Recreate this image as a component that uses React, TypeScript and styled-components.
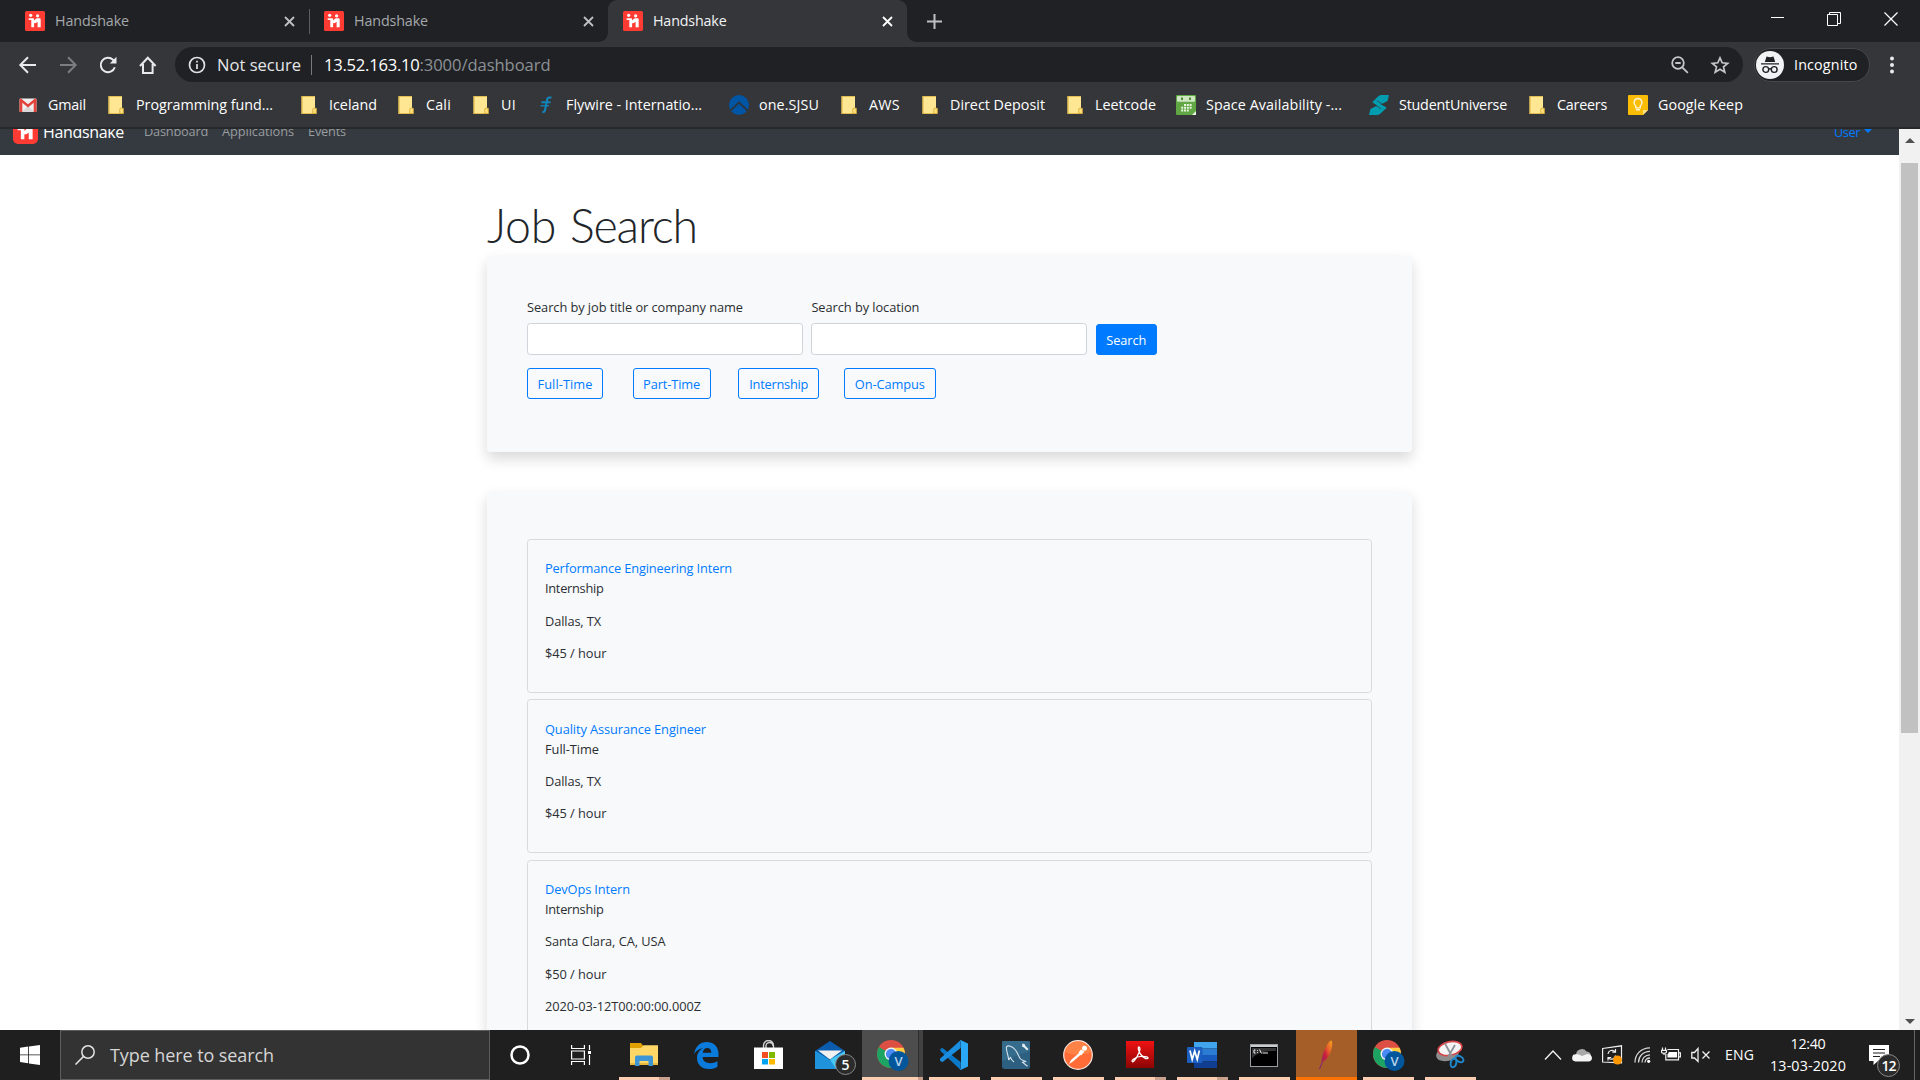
import React, { useLayoutEffect, useRef } from "react";
import styled, { createGlobalStyle, css } from "styled-components";

const Global = createGlobalStyle`
  *, *::before, *::after { box-sizing: border-box; }
  body { margin: 0; background: #fff; overflow: hidden; }
  svg { display: block; flex: none; }
`;

const Screen = styled.div`
  width: 1920px;
  height: 1080px;
  display: flex;
  flex-direction: column;
  overflow: hidden;
  font-family: "Open Sans", "Noto Sans", sans-serif;
  font-size: 14.3px;
  line-height: 1;
  color: #fff;
`;

/* ---------- text that keeps a set advance width ---------- */

const FitSpan = styled.span`
  display: inline-block;
  white-space: pre;
`;

function Fit({ w, children }: { w: number; children: string }) {
  const ref = useRef<HTMLSpanElement>(null);
  useLayoutEffect(() => {
    const el = ref.current;
    if (!el) return;
    el.style.letterSpacing = "0px";
    const natural = el.getBoundingClientRect().width;
    el.style.letterSpacing = `${(w - natural) / children.length}px`;
  }, [w, children]);
  return <FitSpan ref={ref}>{children}</FitSpan>;
}

/* ---------- tab strip ---------- */

const TabStrip = styled.div`
  flex: none;
  height: 42px;
  display: flex;
  background: #202124;
  padding-left: 10px;
`;

const Tab = styled.div<{ $active?: boolean; $line?: boolean }>`
  position: relative;
  width: 299px;
  height: 42px;
  padding: 0 14px 0 15px;
  display: flex;
  align-items: center;
  gap: 10px;
  color: ${(p) => (p.$active ? "#f1f3f4" : "#a4a8ac")};
  ${(p) =>
    p.$active &&
    css`
      background: #35363a;
      border-radius: 9px 9px 0 0;
      &::before,
      &::after {
        content: "";
        position: absolute;
        bottom: 0;
        width: 9px;
        height: 9px;
      }
      &::before {
        left: -9px;
        background: radial-gradient(circle at 0 0, transparent 8.5px, #35363a 9px);
      }
      &::after {
        right: -9px;
        background: radial-gradient(circle at 100% 0, transparent 8.5px, #35363a 9px);
      }
    `}
  ${(p) =>
    p.$line &&
    css`
      &::after {
        content: "";
        position: absolute;
        right: -1px;
        top: 9px;
        width: 1px;
        height: 25px;
        background: #5a5c60;
      }
    `}
`;

const TabTitle = styled.div`
  flex: 1;
`;

const NewTab = styled.div`
  margin-left: 20px;
  display: flex;
  align-items: center;
`;

const WindowButtons = styled.div`
  margin-left: auto;
  height: 38px;
  display: flex;
  align-items: center;
  gap: 43px;
  padding-right: 22px;
`;

/* ---------- toolbar ---------- */

const Toolbar = styled.div`
  flex: none;
  height: 45px;
  display: flex;
  align-items: center;
  background: #35363a;
  padding: 0 20px 0 18px;
`;

const NavButtons = styled.div`
  width: 157px;
  display: flex;
  gap: 20px;
`;

const Omnibox = styled.div`
  width: 1568px;
  height: 35px;
  border-radius: 18px;
  background: #202124;
  display: flex;
  align-items: center;
  padding: 0 13px 0 13px;
  font-size: 16.6px;
  color: #e4e6e8;
`;

const Security = styled.div`
  display: flex;
  align-items: center;
  gap: 11px;
  padding-right: 10px;
  border-right: 1px solid #77797c;
  height: 20px;
  line-height: 20px;
`;

const Address = styled.div`
  margin-left: 12px;
  display: flex;
  color: #fff;
  flex: 1;
  padding-top: 1px;
`;

const Dim = styled.span`
  color: #8d9196;
`;

const OmniIcons = styled.div`
  display: flex;
  gap: 20px;
`;

const Incognito = styled.div`
  margin-left: 11px;
  width: 116px;
  height: 34px;
  border: 1px solid #46474b;
  border-radius: 17px;
  background: #202124;
  display: flex;
  align-items: center;
  gap: 10px;
  padding-left: 1px;
  line-height: 18px;
`;

const PillLabel = styled.div`
  padding-top: 1px;
`;

const MenuDots = styled.div`
  margin-left: 19px;
`;

/* ---------- bookmarks ---------- */

const Bookmarks = styled.div`
  flex: none;
  height: 42px;
  display: flex;
  align-items: center;
  background: #35363a;
  border-bottom: 2px solid #27282a;
  padding: 0 0 5px 18px;
`;

const Bookmark = styled.div<{ $span: number }>`
  flex: none;
  width: ${(p) => p.$span}px;
  display: flex;
  align-items: center;
  gap: 10px;
`;

const BookmarkLabel = styled.div`
  padding-top: 2px;
`;

/* ---------- page ---------- */

const Viewport = styled.div`
  flex: none;
  height: 901px;
  display: flex;
  background: #fff;
`;

const Page = styled.div`
  width: 1899px;
  overflow: hidden;
  color: #2a2e32;
  font-size: 12.8px;
`;

const Navbar = styled.div`
  height: 26px;
  overflow: hidden;
  background: #343a40;
  display: flex;
  flex-direction: column;
  justify-content: flex-end;
`;

const NavRow = styled.div`
  flex: none;
  height: 48px;
  display: flex;
  align-items: center;
  padding: 0 27px 0 13px;
  color: #999c9f;
`;

const Brand = styled.div`
  display: flex;
  align-items: center;
  gap: 5px;
  font-size: 16px;
  color: #fff;
  margin-right: 20px;
`;

const BrandName = styled.div`
  padding-top: 1px;
`;

const NavLinks = styled.div`
  display: flex;
  gap: 14px;
  flex: 1;
`;

const UserMenu = styled.div`
  display: flex;
  align-items: center;
  gap: 4px;
  color: #007bff;
`;

const UserName = styled.div`
  padding-top: 2px;
`;

const Caret = styled.i`
  border: 4px solid transparent;
  border-top-color: #007bff;
  border-bottom: 0;
`;

const Container = styled.main`
  width: 925px;
  margin-left: 487px;
  padding-top: 43px;
`;

const Heading = styled.h1`
  margin: 0;
  height: 58px;
  display: flex;
  gap: 14px;
  line-height: 54px;
  font-family: Lato, "Open Sans", sans-serif;
  font-size: 46.5px;
  font-weight: 300;
  color: #212529;
`;

const Panel = styled.section<{ $h: number }>`
  height: ${(p) => p.$h}px;
  margin-bottom: 40px;
  border-radius: 3.4px;
  background: #f8f9fa;
  box-shadow: 0 6.7px 13.4px rgba(0, 0, 0, 0.15);
`;

const SearchForm = styled(Panel)`
  padding: 41px 40px 0;
`;

const Fields = styled.div`
  display: flex;
  align-items: flex-end;
  gap: 8.4px;
`;

const Field = styled.label`
  width: 276px;
  display: flex;
  flex-direction: column;
  gap: 6px;
  line-height: 20px;
`;

const Input = styled.input`
  width: 100%;
  height: 32px;
  border: 1px solid #ced4da;
  border-radius: 3.4px;
  background: #fff;
`;

const Button = styled.button<{ $w: number; $solid?: boolean }>`
  width: ${(p) => p.$w}px;
  height: 31px;
  padding: 2px 0 0;
  border: 1px solid #007bff;
  border-radius: 3px;
  background: ${(p) => (p.$solid ? "#007bff" : "transparent")};
  color: ${(p) => (p.$solid ? "#fff" : "#007bff")};
  font: 12.8px/1 "Open Sans", "Noto Sans", sans-serif;
`;

const Filters = styled.div`
  margin-top: 13px;
  display: grid;
  grid-template-columns: repeat(4, 105.6px);
`;

const Results = styled(Panel)`
  padding: 47px 40px 0;
`;

const Job = styled.article<{ $h: number }>`
  height: ${(p) => p.$h}px;
  margin-bottom: 6.7px;
  padding: 18.2px 17px;
  border: 1px solid #d8dadc;
  border-radius: 3.4px;
  line-height: 20px;
`;

const JobTitle = styled.div`
  color: #007bff;
`;

const JobLine = styled.p`
  margin: 0 0 12.4px;
`;

const Scrollbar = styled.div`
  width: 21px;
  background: #f1f1f1;
  display: flex;
  flex-direction: column;
  align-items: center;
  justify-content: space-between;
  padding: 9px 0 6px;
`;

const Thumb = styled.div`
  width: 17px;
  height: 570px;
  margin: 20px 0 auto;
  background: #c1c1c1;
`;

const Arrow = styled.i<{ $down?: boolean }>`
  border: 5px solid transparent;
  ${(p) =>
    p.$down
      ? "border-top-color: #505050; border-bottom: 0;"
      : "border-bottom-color: #505050; border-top: 0;"}
`;

/* ---------- taskbar ---------- */

const Taskbar = styled.div`
  flex: none;
  height: 50px;
  display: flex;
  background: #1f1f1f;
`;

const Start = styled.div`
  width: 60px;
  display: flex;
  align-items: center;
  justify-content: center;
`;

const SearchBox = styled.div`
  width: 430px;
  border: 1px solid #5d5d5d;
  background: #333;
  display: flex;
  align-items: center;
  gap: 15px;
  padding-left: 14px;
  font-size: 18px;
  color: #d6d6d6;
`;

const Slot = styled.div<{ $bg?: string; $line?: string; $split?: boolean; $wide?: boolean }>`
  flex: none;
  position: relative;
  width: 62px;
  display: flex;
  align-items: center;
  justify-content: center;
  &::before {
    content: "";
    position: absolute;
    z-index: 0;
    inset: 0 0 0 1px;
    background: ${(p) => p.$bg ?? "transparent"};
  }
  &::after {
    content: "";
    position: absolute;
    left: ${(p) => (p.$wide ? 1 : 6)}px;
    right: ${(p) => (p.$wide ? 0 : 5)}px;
    bottom: 0;
    height: 3px;
    background: ${(p) =>
      p.$line
        ? p.$split
          ? `linear-gradient(90deg, ${p.$line} ${p.$wide ? "56px" : "40px"}, #c9a18c 0)`
          : p.$line
        : "transparent"};
  }
  svg {
    position: relative;
  }
`;

const Cortana = styled.div`
  width: 61px;
  padding-right: 2px;
  display: flex;
  align-items: center;
  justify-content: center;
`;

const Badge = styled.div<{ $x: number; $y: number; $size: number }>`
  position: absolute;
  left: ${(p) => p.$x}px;
  top: ${(p) => p.$y}px;
  width: ${(p) => p.$size}px;
  height: ${(p) => p.$size}px;
  border: 1px solid #8a8a8a;
  border-radius: 50%;
  background: #2b2b2b;
  display: flex;
  align-items: center;
  justify-content: center;
  font-size: 14px;
  font-weight: 600;
`;

const Tray = styled.div`
  margin-left: auto;
  display: flex;
  align-items: center;
`;

const TrayIcons = styled.div`
  display: flex;
  align-items: center;
  gap: 10px;
`;

const Language = styled.div`
  margin-left: 14px;
  width: 45px;
  font-size: 14px;
`;

const Clock = styled.div`
  width: 76px;
  display: flex;
  flex-direction: column;
  align-items: center;
  gap: 8px;
  font-size: 14.3px;
`;

const Notifications = styled.div`
  position: relative;
  margin-left: 23px;
  width: 45px;
  height: 50px;
  padding-top: 15px;
`;

const ShowDesktop = styled.div`
  height: 50px;
  width: 6px;
  border-left: 1px solid #666;
`;

/* ---------- icons ---------- */

const Favicon = ({ size = 20, round = 1.6 }: { size?: number; round?: number }) => (
  <svg width={size} height={size} viewBox="0 0 20 20">
    <rect width="20" height="20" rx={round} fill="#ff3b33" />
    <g fill="#fff">
      <circle cx="5.700" cy="4.300" r="1.600" />
      <circle cx="12.600" cy="4.800" r="1.600" />
      <path d="M3.700 7.200h4.200c.8 0 1.200.4 1.200 1.200v1.200l1.300-1.300c.6-.7 1.100-1 2-1h2c.8 0 1.300.5 1.300 1.300v7.600h-3.100v-5.500l-1.300 1.100c-.6.5-1.300.6-2.200.3v4.100H6.300V8.900H3.700z" />
    </g>
  </svg>
);

const Close = ({ color }: { color: string }) => (
  <svg width="11" height="11" viewBox="0 0 11 11" stroke={color} strokeWidth="1.8">
    <path d="M1 1l9 9M10 1l-9 9" />
  </svg>
);

const Folder = () => (
  <svg width="20" height="20" viewBox="0 0 20 20">
    <path d="M2.500 1h13.500v12.200l1.300.6V19H2.500z" fill="#ffe693" />
    <path d="M2.500 1h1v18h-1zM2.500 18.200h14.800v.8H2.500zM2.500 1H16v.8H2.500z" fill="#d9b13b" />
    <path d="M13.800 18.500v-4.300c0-.8.500-1 1.400-1H17.300v5.300z" fill="#ffe27a" stroke="#cfa52e" strokeWidth=".8" />
  </svg>
);

const Gmail = () => (
  <svg width="20" height="20" viewBox="0 0 20 20">
    <rect x="1.500" y="3.500" width="17" height="13.500" rx="1" fill="#f0eeee" />
    <path d="M3.500 17L10 11l6.500 6z" fill="#d9d7d7" />
    <path d="M1.500 17V4.500c0-1 1-1.300 1.800-.7L10 9.300l6.700-5.500c.8-.6 1.800-.3 1.800.7V17h-2.800V7.800L10 12.500 4.300 7.800V17z" fill="#e0443a" />
  </svg>
);

const Flywire = () => (
  <svg width="20" height="20" viewBox="0 0 20 20" fill="none" stroke="#1187bd" strokeWidth="2">
    <path d="M15.500 2.500h-2c-1.600 0-2.200.8-2.500 2.400L9.200 14.500c-.3 1.500-1 2.700-2.700 2.700M5.500 7.300h9" />
    <path d="M4.500 10.800h8.500" strokeWidth="1.300" />
  </svg>
);

const Sjsu = () => (
  <svg width="20" height="20" viewBox="0 0 20 20">
    <circle cx="10" cy="10" r="10" fill="#0055a5" />
    <path d="M1.500 15.500L10 7.500l8.500 8" fill="none" stroke="#2c3540" strokeWidth="1.800" />
    <path d="M4.500 18L10 12.500l5.500 5.500" fill="#0055a5" />
  </svg>
);

const Calendar = () => (
  <svg width="20" height="20" viewBox="0 0 20 20">
    <rect width="20" height="20" rx="1" fill="#61a744" />
    <rect x="1" y="1" width="18" height="5.800" rx="1" fill="#cfe6c3" />
    <path d="M5 2.500h2v2.500H5zM13 2.500h2v2.500h-2z" fill="#4d8e33" />
    <g fill="#e8f5e0">
      <path d="M8 9h2v2H8zM10.800 9h2v2h-2zM13.600 9h2v2h-2zM5.200 11.800h2v2h-2zM8 11.800h2v2H8zM10.800 11.800h2v2h-2zM13.600 11.800h2v2h-2zM5.200 14.600h2v2h-2zM8 14.600h2v2H8zM10.800 14.600h2v2h-2z" />
      <path d="M16 20l4-4v4z" />
    </g>
  </svg>
);

const StudentUniverse = () => (
  <svg width="20" height="20" viewBox="0 0 20 20" fill="#009db1">
    <path d="M20 0l-1.500 6L9 11 3 7.500 9 1.500c1-.9 2-1.500 3.500-1.500z" />
    <path d="M0 20l1.500-6L11 9l7 3.500-6.500 6c-1 .9-2 1.500-3.500 1.500z" />
    <path d="M3 7.500L12 14M8 5.500l10 7" stroke="#35363a" strokeWidth=".7" />
  </svg>
);

const Keep = () => (
  <svg width="20" height="20" viewBox="0 0 20 20">
    <path d="M1 0h18a1 1 0 011 1v14l-5 5H1a1 1 0 01-1-1V1a1 1 0 011-1z" fill="#fbbc04" />
    <path d="M15 20v-5h5z" fill="#ffe08a" />
    <path d="M10 3.500a4 4 0 00-2.300 7.200v2.200h4.600v-2.200A4 4 0 0010 3.500zM8 14.800h4" fill="none" stroke="#fff3cf" strokeWidth="1.400" />
  </svg>
);

const Chrome = () => (
  <svg width="36" height="32" viewBox="0 0 36 32">
    <g transform="translate(17 15)">
      <circle r="14" fill="#dd4f43" />
      <path d="M0 0L-12.120-7A14 14 0 000 14L6 3z" fill="#1da462" />
      <path d="M0-6.300H12.500A14 14 0 010 14L5.500 3.200z" fill="#ffcd42" />
      <circle r="6.500" fill="#f1f1f1" />
      <circle r="5.100" fill="#4a8af4" />
    </g>
    <circle cx="24.500" cy="22" r="10" fill="#02569b" />
    <text x="24.500" y="26.800" textAnchor="middle" fontFamily="Open Sans, sans-serif" fontWeight="600" fontSize="13" fill="#b9d3ea">
      V
    </text>
  </svg>
);

const Explorer = () => (
  <svg width="28" height="24" viewBox="0 0 28 24">
    <path d="M0 0h11l2 2.500V6H0z" fill="#e0a100" />
    <path d="M0 5h11l2.500-2.700H28V22H0z" fill="#ffd767" />
    <path d="M0 20h28v2H0z" fill="#e9b93f" />
    <path d="M5 23V14.500c0-1.300.8-2 2-2h14c1.200 0 2 .7 2 2V23h-4.500v-5h-9v5z" fill="#3e95d6" />
  </svg>
);

const Edge = () => (
  <svg width="25" height="27" viewBox="0 0 25 27">
    <path d="M0 12C1.200 4.700 6 0 12.800 0 20.300 0 24.500 5.200 24.500 11.700V15H8.600c.2 4.200 3.600 6.200 7.700 6.200 2.700 0 5-.7 7.200-2v5.500C21.200 26.200 18.300 27 15 27 7.400 27 3 22.300 3 16c0-4.400 2.300-8 6.300-10C5.500 6.500 2 8.700 0 12zm8.700-1.200h8.600c0-3-1.400-4.800-4-4.800-2.500 0-4.200 2-4.600 4.800z" fill="#0a7bdb" />
  </svg>
);

const Store = () => (
  <svg width="29" height="30" viewBox="0 0 29 30">
    <path d="M9.500 8V5.500a5 5 0 0110 0V8M12 8V6a3.500 3.500 0 017 0" fill="none" stroke="#cfcfcf" strokeWidth="1.400" />
    <path d="M0 7.500h29V29H0z" fill="#fff" />
    <path d="M8 12h6v6H8z" fill="#f25022" />
    <path d="M15 12h6v6h-6z" fill="#7fba00" />
    <path d="M8 19h6v5.500H8z" fill="#00a4ef" />
    <path d="M15 19h6v5.500h-6z" fill="#ffb900" />
  </svg>
);

const Mail = () => (
  <svg width="30" height="28" viewBox="0 0 30 28">
    <path d="M0 10L15 0l15 10v8H0z" fill="#0b5cad" />
    <path d="M0 10l15 9.500L30 10v18H0z" fill="#2aa9ea" />
    <path d="M0 10l30 18H0z" fill="#1f94dd" />
    <path d="M3 9.500h24L15 18.500z" fill="#f1f1f1" />
    <path d="M30 10L15 18.500 21 28h9z" fill="#45c7f6" />
  </svg>
);

const VsCode = () => (
  <svg width="30" height="30" viewBox="0 0 30 30">
    <path d="M1 9.600l2.200-1.900 18.500 14.400V30L2 11.500z" fill="#0b79c8" />
    <path d="M1 20.400l2.200 1.900L21.700 8V0L1 18.800z" fill="#1a8ee0" />
    <path d="M21.500 0L29 3.500v23L21.500 30l-1-1c.9.500 1.500 0 1.500-1V2c0-1-.6-1.500-1.500-1z" fill="#2aa8f5" />
  </svg>
);

const MySql = () => (
  <svg width="28" height="28" viewBox="0 0 28 28">
    <rect width="28" height="28" rx="2.500" fill="#2c5f80" />
    <path d="M0 0h28v10L0 20z" fill="#3c7393" opacity=".6" />
    <g fill="none" stroke="#d5e2ea" strokeWidth="1.100">
      <path d="M6.500 19C7 15 3.500 9 4.500 6c1.500-2.500 6-.5 8.500 2.500 3 3.500 3.500 7 5.500 9.500 1 1.200 3.500 1.500 5 2.500l-3 .8 5 4M6.500 19c.8-.5 1.300-2 2-2.500 1 2.500 2 3.500 3.500 4.500" />
    </g>
    <path d="M20.500 2.500l2 .5 1 2 3 3-1.500 1.500-3-3-2-1z" fill="#e3edf2" />
  </svg>
);

const Postman = () => (
  <svg width="30" height="30" viewBox="0 0 30 30">
    <circle cx="15" cy="15" r="14.300" fill="#ff6c37" stroke="#f7e5dc" strokeWidth="1.200" />
    <path d="M1.500 12a14 14 0 0127 0C20 16 8 15 1.500 12z" fill="#ff8d4d" opacity=".7" />
    <path d="M6 24l2-4 8-7 2 1.500-8 7zM15.500 12.500l2.500-3 3.500 2-3.500 4z" fill="#fff" />
    <circle cx="21.500" cy="8.300" r="2.500" fill="#fff" />
  </svg>
);

const Adobe = () => (
  <svg width="28" height="28" viewBox="0 0 28 28">
    <defs>
      <linearGradient id="adobe" x1="0" y1="0" x2="0" y2="1">
        <stop offset="0" stopColor="#f01212" />
        <stop offset="1" stopColor="#8c0505" />
      </linearGradient>
    </defs>
    <rect width="28" height="27" fill="url(#adobe)" />
    <path d="M13 6c2.500 1-.5 9-5.500 14.500-1.500 1-2-.8-.5-2 4-3 10-4 14.500-2.300 1.500 1-.5 2-2.500 1C14.500 15 12 9.500 12.300 6.800c.1-.7.400-.8.700-.8z" fill="none" stroke="#fff" strokeWidth="1.300" />
  </svg>
);

const Word = () => (
  <svg width="30" height="26" viewBox="0 0 30 26">
    <path d="M7 0h23v6.500H7z" fill="#41a5ee" />
    <path d="M7 6.500h23V13H7z" fill="#2b7cd3" />
    <path d="M7 13h23v6.500H7z" fill="#185abd" />
    <path d="M7 19.500h23V26H7z" fill="#103f91" />
    <rect y="5" width="15.500" height="16" rx="1" fill="#1c5fc1" />
    <path d="M3 8.500l2.200 9 2.500-8.500 2.500 8.500 2.200-9" fill="none" stroke="#fff" strokeWidth="1.700" />
  </svg>
);

const Cmd = () => (
  <svg width="28" height="23" viewBox="0 0 28 23">
    <rect x=".5" y=".5" width="27" height="22" fill="#000" stroke="#9aa0a4" />
    <path d="M1 1h26v2H1z" fill="#c9cdd0" />
    <path d="M2 4h24v3C14 7 5 10 2 15z" fill="#353535" />
    <path d="M5.500 6H4v3h1.500M7.500 6.200v.8M7.500 8.200V9M9.500 5.500l2 4M12.500 9H18" fill="none" stroke="#eee" strokeWidth="1" />
  </svg>
);

const Feather = () => (
  <svg width="18" height="30" viewBox="0 0 18 30">
    <defs>
      <linearGradient id="feather" x1="1" y1="0" x2="0" y2="1">
        <stop offset="0" stopColor="#f9a51b" />
        <stop offset=".3" stopColor="#e8602a" />
        <stop offset=".5" stopColor="#c8203c" />
        <stop offset="1" stopColor="#6d2c7f" />
      </linearGradient>
    </defs>
    <path d="M14.500.5c1.400 2.500.6 7-.8 11-1.500 4.300-3.800 8-7.500 10L3 29.500l-1-.5 2.700-7C4.500 17 6.800 11 9.300 6.500c1.600-3 3.200-6.300 5.200-6z" fill="url(#feather)" />
  </svg>
);

const Snip = () => (
  <svg width="30" height="30" viewBox="0 0 30 30">
    <ellipse cx="12.500" cy="14" rx="11.500" ry="7" fill="#8d8d8d" transform="rotate(-12 12.500 14)" />
    <ellipse cx="15" cy="8.500" rx="12" ry="6.800" fill="#f4f4f4" stroke="#d8454a" strokeWidth="1.600" transform="rotate(-12 15 8.500)" />
    <path d="M10 3.500l7 13M20 5l-7 12" stroke="#8c9297" strokeWidth="1.800" />
    <g fill="none" stroke="#1f86cc" strokeWidth="2">
      <ellipse cx="18.500" cy="23" rx="2.800" ry="4.300" transform="rotate(12 18.500 23)" />
      <ellipse cx="24.500" cy="19" rx="4.300" ry="2.700" transform="rotate(30 24.500 19)" />
    </g>
  </svg>
);

/* ---------- data ---------- */

const bookmarks: { icon: React.ReactNode; text: string; w: number; span: number }[] = [
  { icon: <Gmail />, text: "Gmail", w: 38, span: 88 },
  { icon: <Folder />, text: "Programming fund...", w: 137, span: 193 },
  { icon: <Folder />, text: "Iceland", w: 48, span: 97 },
  { icon: <Folder />, text: "Cali", w: 25, span: 75 },
  { icon: <Folder />, text: "UI", w: 15, span: 65 },
  { icon: <Flywire />, text: "Flywire - Internatio...", w: 136, span: 193 },
  { icon: <Sjsu />, text: "one.SJSU", w: 60, span: 110 },
  { icon: <Folder />, text: "AWS", w: 31, span: 81 },
  { icon: <Folder />, text: "Direct Deposit", w: 95, span: 145 },
  { icon: <Folder />, text: "Leetcode", w: 61, span: 111 },
  { icon: <Calendar />, text: "Space Availability -...", w: 136, span: 193 },
  { icon: <StudentUniverse />, text: "StudentUniverse", w: 108, span: 158 },
  { icon: <Folder />, text: "Careers", w: 50, span: 101 },
  { icon: <Keep />, text: "Google Keep", w: 85, span: 130 },
];

const jobs: { title: [string, number]; lines: [string, number][]; h: number }[] = [
  { title: ["Performance Engineering Intern", 187], lines: [["Internship", 58.5], ["Dallas, TX", 56], ["$45 / hour", 61.5]], h: 153.7 },
  { title: ["Quality Assurance Engineer", 161], lines: [["Full-Time", 54], ["Dallas, TX", 56], ["$45 / hour", 61.5]], h: 153.7 },
  {
    title: ["DevOps Intern", 85],
    lines: [["Internship", 58.5], ["Santa Clara, CA, USA", 120.5], ["$50 / hour", 61.5], ["2020-03-12T00:00:00.000Z", 156]],
    h: 186,
  },
];

const filters: { text: string; w: number; box: number }[] = [
  { text: "Full-Time", w: 55, box: 76 },
  { text: "Part-Time", w: 57, box: 78 },
  { text: "Internship", w: 59, box: 81 },
  { text: "On-Campus", w: 70, box: 92 },
];

const LINE = "#fbcdb2";

export default function App() {
  return (
    <Screen>
      <Global />
      <TabStrip>
        <Tab $line>
          <Favicon />
          <TabTitle><Fit w={74}>Handshake</Fit></TabTitle>
          <Close color="#bdc1c6" />
        </Tab>
        <Tab>
          <Favicon />
          <TabTitle><Fit w={74}>Handshake</Fit></TabTitle>
          <Close color="#bdc1c6" />
        </Tab>
        <Tab $active>
          <Favicon />
          <TabTitle><Fit w={73.5}>Handshake</Fit></TabTitle>
          <Close color="#fff" />
        </Tab>
        <NewTab>
          <svg width="15" height="15" viewBox="0 0 15 15" stroke="#bdc1c6" strokeWidth="2">
            <path d="M7.500 0v15M0 7.500h15" />
          </svg>
        </NewTab>
        <WindowButtons>
          <svg width="13" height="13" viewBox="0 0 13 13" stroke="#fff"><path d="M0 4.500h13" /></svg>
          <svg width="14" height="14" viewBox="0 0 14 14" fill="none" stroke="#fff">
            <path d="M.5 2.500h10v11H.5zM2.500 2.500v-2h11v11h-3" />
          </svg>
          <svg width="14" height="14" viewBox="0 0 14 14" stroke="#fff" strokeWidth="1.200"><path d="M.5.5l13 13M13.500.5l-13 13" /></svg>
        </WindowButtons>
      </TabStrip>

      <Toolbar>
        <NavButtons>
          <svg width="20" height="20" viewBox="0 0 20 20" fill="none" stroke="#e8eaed" strokeWidth="2">
            <path d="M18 10H2.500M10 2.200L2.300 10l7.700 7.800" />
          </svg>
          <svg width="20" height="20" viewBox="0 0 20 20" fill="none" stroke="#7b7d80" strokeWidth="2">
            <path d="M2 10h15.500M10 2.200l7.700 7.800-7.700 7.800" />
          </svg>
          <svg width="20" height="20" viewBox="0 0 20 20" fill="none" stroke="#e8eaed" strokeWidth="2">
            <path d="M16.800 12.200A7.200 7.200 0 1115 4.800l1.500 1.500" />
            <path d="M18.500 1.800v6.700h-6.700z" fill="#e8eaed" stroke="none" />
          </svg>
          <svg width="20" height="20" viewBox="0 0 20 20" fill="none" stroke="#e8eaed" strokeWidth="2">
            <path d="M2 11l7.800-8.200L17.600 11M5 9v9h9.600V9" />
          </svg>
        </NavButtons>
        <Omnibox>
          <Security>
            <svg width="18" height="18" viewBox="0 0 18 18" fill="none" stroke="#e0e2e4" strokeWidth="1.700">
              <circle cx="9" cy="9" r="7.500" />
              <path d="M9 8v5M9 4.800v1.700" />
            </svg>
            <Fit w={84}>Not secure</Fit>
          </Security>
          <Address>
            <Fit w={95.5}>13.52.163.10</Fit>
            <Dim><Fit w={131}>:3000/dashboard</Fit></Dim>
          </Address>
          <OmniIcons>
            <svg width="20" height="20" viewBox="0 0 20 20" fill="none" stroke="#c4c7ca" strokeWidth="1.800">
              <circle cx="8" cy="8" r="5.800" />
              <path d="M12.300 12.300l5.500 5.500M5.300 8h5.400" />
            </svg>
            <svg width="20" height="20" viewBox="0 0 20 20" fill="none" stroke="#c4c7ca" strokeWidth="1.700">
              <path d="M10 2.800l2.200 5 5.500.5-4.200 3.600 1.300 5.300-4.800-2.900-4.800 2.900 1.300-5.300-4.200-3.600 5.500-.5z" />
            </svg>
          </OmniIcons>
        </Omnibox>
        <Incognito>
          <svg width="28" height="28" viewBox="0 0 28 28">
            <circle cx="14" cy="14" r="14" fill="#f1f3f4" />
            <path d="M10.500 5.500l3.500.7 3.500-.7L19.200 11H8.800zM5 12.200h18v1.300H5z" fill="#202124" />
            <g fill="none" stroke="#202124" strokeWidth="1.400">
              <circle cx="9.800" cy="18.500" r="2.900" />
              <circle cx="18.200" cy="18.500" r="2.900" />
              <path d="M12.500 18.200q1.500-1 3 0" />
            </g>
          </svg>
          <PillLabel><Fit w={63.5}>Incognito</Fit></PillLabel>
        </Incognito>
        <MenuDots>
          <svg width="6" height="18" viewBox="0 0 6 18" fill="#e8eaed">
            <circle cx="3" cy="2.500" r="2" />
            <circle cx="3" cy="9" r="2" />
            <circle cx="3" cy="15.500" r="2" />
          </svg>
        </MenuDots>
      </Toolbar>

      <Bookmarks>
        {bookmarks.map((b) => (
          <Bookmark key={b.text} $span={b.span}>
            {b.icon}
            <BookmarkLabel><Fit w={b.w}>{b.text}</Fit></BookmarkLabel>
          </Bookmark>
        ))}
      </Bookmarks>

      <Viewport>
        <Page>
          <Navbar>
            <NavRow>
              <Brand>
                <Favicon size={25} round={4} />
                <BrandName><Fit w={81}>Handshake</Fit></BrandName>
              </Brand>
              <NavLinks>
                <Fit w={64}>Dashboard</Fit>
                <Fit w={72}>Applications</Fit>
                <Fit w={38}>Events</Fit>
              </NavLinks>
              <UserMenu>
                <UserName><Fit w={26}>User</Fit></UserName>
                <Caret />
              </UserMenu>
            </NavRow>
          </Navbar>
          <Container>
            <Heading>
              <Fit w={69}>Job</Fit>
              <Fit w={127}>Search</Fit>
            </Heading>
            <SearchForm $h={196}>
              <Fields>
                <Field>
                  <div><Fit w={216}>Search by job title or company name</Fit></div>
                  <Input />
                </Field>
                <Field>
                  <div><Fit w={108}>Search by location</Fit></div>
                  <Input />
                </Field>
                <Button $w={61} $solid><Fit w={40}>Search</Fit></Button>
              </Fields>
              <Filters>
                {filters.map((f) => (
                  <Button key={f.text} $w={f.box}><Fit w={f.w}>{f.text}</Fit></Button>
                ))}
              </Filters>
            </SearchForm>
            <Results $h={700}>
              {jobs.map((j) => (
                <Job key={j.title[0]} $h={j.h}>
                  <JobTitle><Fit w={j.title[1]}>{j.title[0]}</Fit></JobTitle>
                  {j.lines.map(([text, w]) => (
                    <JobLine key={text}><Fit w={w}>{text}</Fit></JobLine>
                  ))}
                </Job>
              ))}
            </Results>
          </Container>
        </Page>
        <Scrollbar>
          <Arrow />
          <Thumb />
          <Arrow $down />
        </Scrollbar>
      </Viewport>

      <Taskbar>
        <Start>
          <svg width="20" height="20" viewBox="0 0 20 20" fill="#fff">
            <path d="M0 2.800l8.200-1.200v7.900H0zM9 1.500L20 0v9.500H9zM0 10.300h8.200v7.900L0 17.100zM9 10.300h11V20L9 18.400z" />
          </svg>
        </Start>
        <SearchBox>
          <svg width="20" height="20" viewBox="0 0 20 20" fill="none" stroke="#e3e3e3" strokeWidth="1.500">
            <circle cx="13" cy="7" r="6.200" />
            <path d="M8.600 11.400L.5 19.500" />
          </svg>
          <Fit w={164}>Type here to search</Fit>
        </SearchBox>
        <Cortana>
          <svg width="20" height="20" viewBox="0 0 20 20" fill="none" stroke="#fff" strokeWidth="2.500"><circle cx="10" cy="10" r="8.500" /></svg>
        </Cortana>
        <Slot>
          <svg width="22" height="20" viewBox="0 0 22 20" fill="none" stroke="#fff" strokeWidth="1.200">
            <path d="M.6 0v3.500h12.800V0M.6 6h12.800v8H.6zM.6 20v-3.500h12.800V20M18.500 0v5M18.500 10v10" />
            <path d="M17 6h3v3h-3z" fill="#fff" stroke="none" />
          </svg>
        </Slot>
        <Slot $line={LINE} $split><Explorer /></Slot>
        <Slot><Edge /></Slot>
        <Slot><Store /></Slot>
        <Slot>
          <Mail />
          <Badge $x={36} $y={24} $size={21}>5</Badge>
        </Slot>
        <Slot $bg="linear-gradient(90deg, #4d4d4d 56px, #2d2d2d 56px, #2d2d2d 57px, #424242 57px)" $line={LINE} $split $wide><Chrome /></Slot>
        <Slot $line={LINE}><VsCode /></Slot>
        <Slot $line={LINE}><MySql /></Slot>
        <Slot $line={LINE}><Postman /></Slot>
        <Slot $line={LINE} $split><Adobe /></Slot>
        <Slot $line={LINE} $split><Word /></Slot>
        <Slot $line={LINE}><Cmd /></Slot>
        <Slot $bg="#a55e28" $line="#ff7200" $wide><Feather /></Slot>
        <Slot $line={LINE}><Chrome /></Slot>
        <Slot $line={LINE}><Snip /></Slot>
        <Tray>
          <TrayIcons>
            <svg width="18" height="20" viewBox="0 0 18 20" fill="none" stroke="#f0f0f0" strokeWidth="1.400"><path d="M1 14.500L9 6l8 8.500" /></svg>
            <svg width="20" height="20" viewBox="0 0 20 20">
              <path d="M4 10a5.800 5.800 0 0110.500-3.500A4.500 4.500 0 0119 11l-8 3z" fill="#a9a9a9" />
              <path d="M3.500 16.500a3.600 3.600 0 01.5-7.200c2.500-.5 4 .5 6 1.700l4.500-1.800c3-.5 5.500 1.300 5.500 3.900 0 2-1.500 3.400-3.500 3.400z" fill="#f4f4f4" />
            </svg>
            <svg width="21" height="20" viewBox="0 0 21 20" fill="none" stroke="#f0f0f0" strokeWidth="1.200">
              <path d="M.6 3.500L19.500.8v17L.6 17z" />
              <path d="M6 9a4 4 0 017-2.300M13.500 4v3.200h-3.200M13.500 10.500a4 4 0 01-7 2.300M6 15.500v-3h3.200" />
              <circle cx="15.500" cy="15" r="4.500" fill="#ff9800" stroke="none" />
            </svg>
            <svg width="18" height="20" viewBox="0 0 18 20" fill="none" strokeWidth="1.300" stroke="#d8d8d8">
              <path d="M2 17.500C2 9.500 8 2.800 17 2.800M5.500 17.500C5.500 11.500 10 6.300 17 6.300M9 17.500c0-4 3-7.700 8-7.700M12 17.500c0-2.500 2-4.500 5-4.500" />
              <circle cx="15.700" cy="16.300" r="1.600" fill="#fff" stroke="none" />
            </svg>
            <svg width="20" height="20" viewBox="0 0 20 20" fill="none" stroke="#f0f0f0" strokeWidth="1.200">
              <path d="M6.500 4.500h11v10.300H4.800V9M18 7.800h1.400v4H18M1.500 2.500v2.800M4.500 2.500v2.800M.5 5.300h5v1.500c0 1-1 1.500-2.500 1.500S.5 7.800.5 6.800zM3 8.500V10" />
              <path d="M8 7h8v5.500H6.500V9.500z" fill="#fff" stroke="none" />
            </svg>
            <svg width="20" height="20" viewBox="0 0 20 20" fill="none" stroke="#f0f0f0" strokeWidth="1.300">
              <path d="M.8 7.500v5.500h2.700L7 16.500v-13L3.500 7.500zM11.500 6.500l7 7M18.500 6.500l-7 7" />
            </svg>
          </TrayIcons>
          <Language><Fit w={29}>ENG</Fit></Language>
          <Clock>
            <Fit w={35}>12:40</Fit>
            <Fit w={76}>13-03-2020</Fit>
          </Clock>
          <Notifications>
            <svg width="20" height="20" viewBox="0 0 20 20">
              <path d="M0 0h20v16H9l-4.500 4V16H0z" fill="#fff" />
              <path d="M4 4.500h12M4 8h12M4 11.500h7" stroke="#1f1f1f" strokeWidth="1.200" />
            </svg>
            <Badge $x={8} $y={24} $size={23}><Fit w={14}>12</Fit></Badge>
          </Notifications>
          <ShowDesktop />
        </Tray>
      </Taskbar>
    </Screen>
  );
}
